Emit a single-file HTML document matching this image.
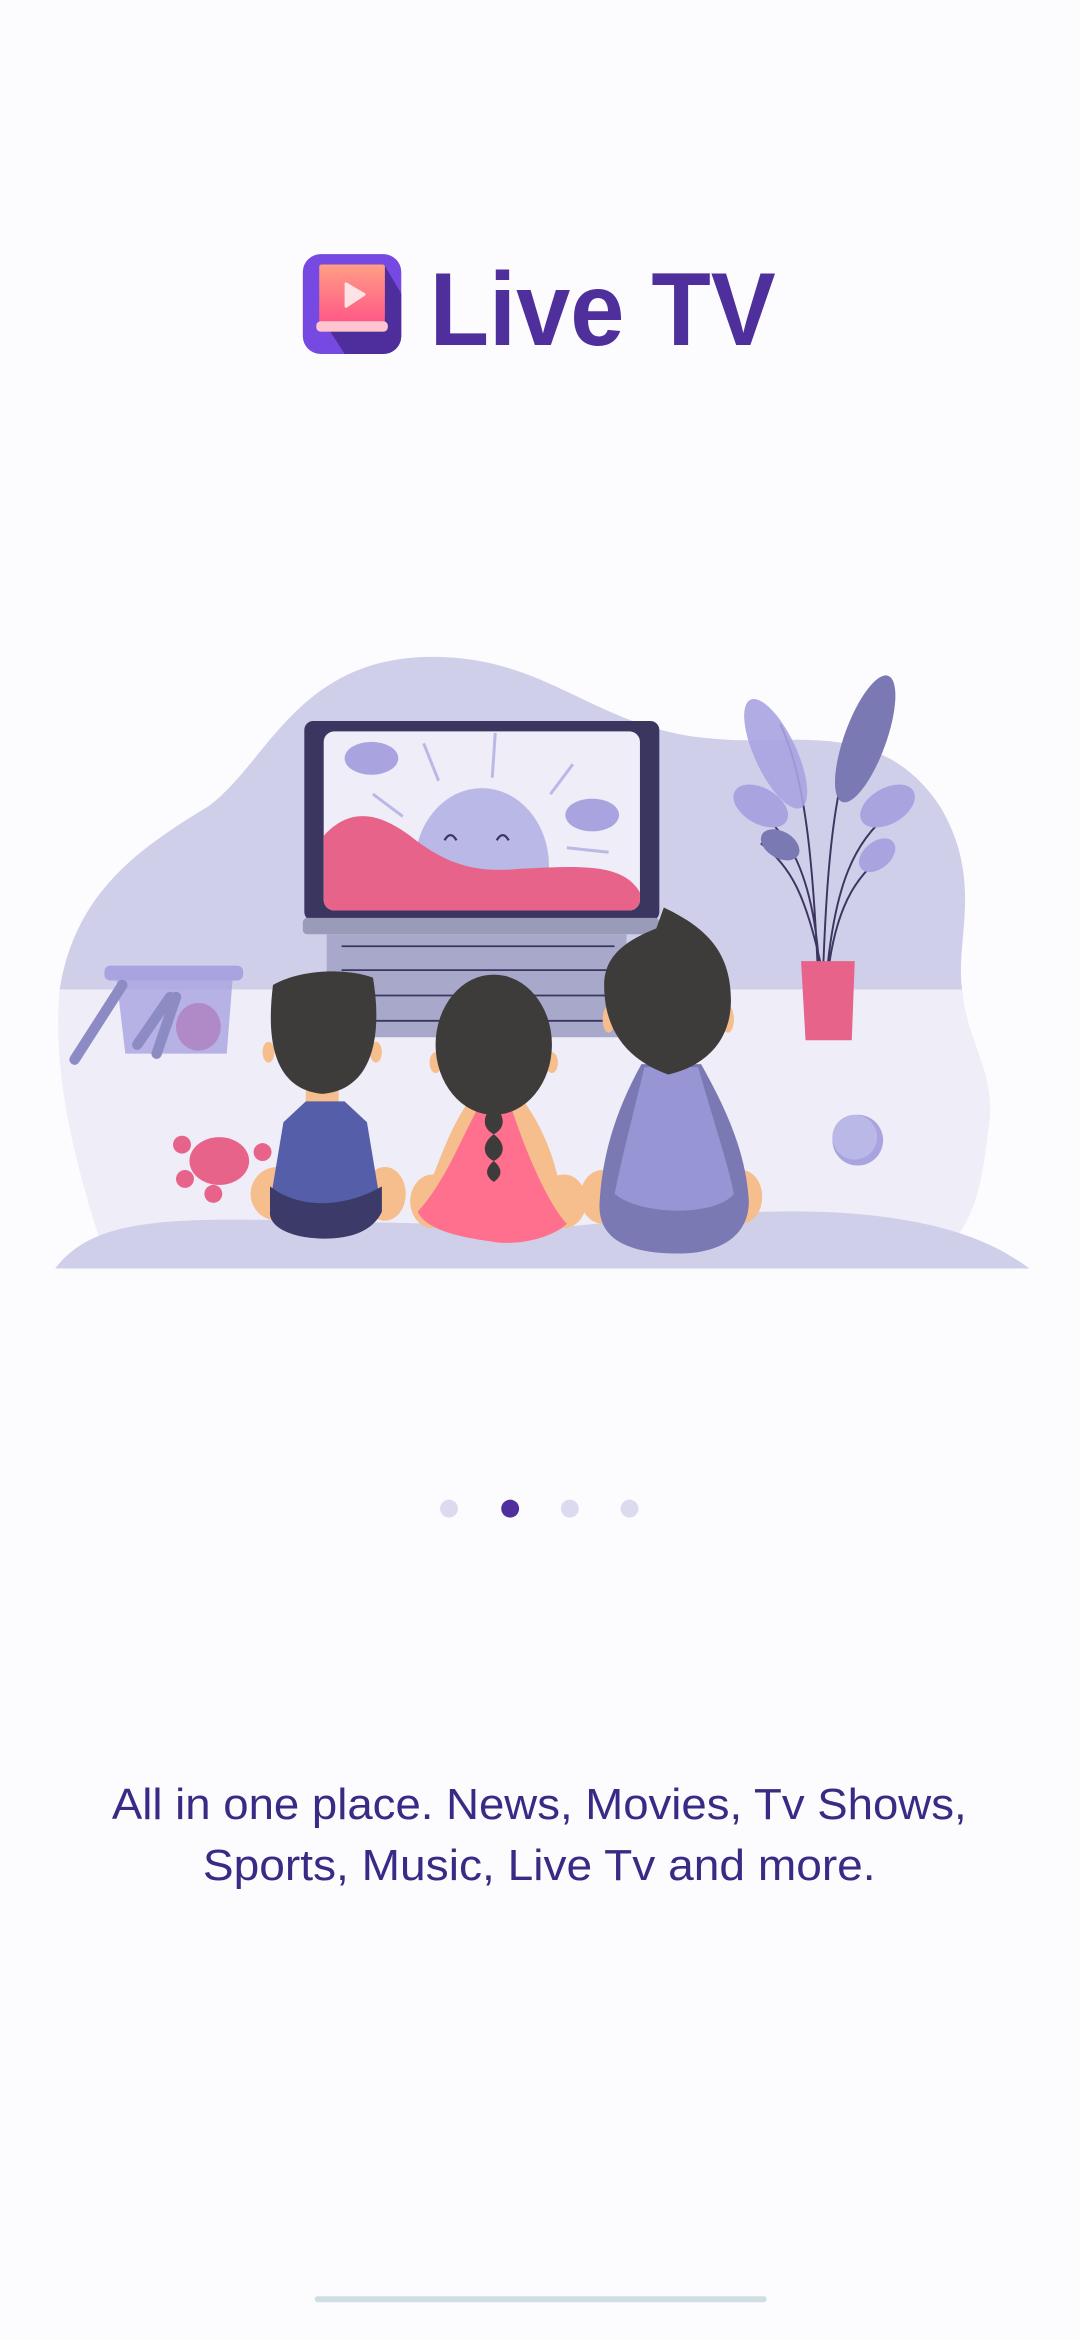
<!DOCTYPE html>
<html><head><meta charset="utf-8"><style>
html,body{margin:0;padding:0;background:#fcfbfe;}
svg{display:block}
</style></head><body>
<svg width="1080" height="2340" viewBox="0 0 724 1568" xmlns="http://www.w3.org/2000/svg">
<rect width="724" height="1568" fill="#fcfbfe"/>
<defs>
<linearGradient id="scr" x1="0" y1="0" x2="0" y2="1"><stop offset="0" stop-color="#ff9e86"/><stop offset="1" stop-color="#ff4d86"/></linearGradient>
<clipPath id="ic"><rect x="203" y="170" width="66" height="67" rx="12"/></clipPath>
</defs>
<rect x="203" y="170" width="66" height="67" rx="12" fill="#7649e3"/>
<g clip-path="url(#ic)"><polygon points="258,178 280,215 280,240 233,240 215,212 258,212" fill="#4e2e9b"/></g>
<rect x="214" y="177" width="44" height="45" rx="1.5" fill="url(#scr)"/>
<path d="M232,190 L244,197 L232,205 Z" fill="#fde3e6" stroke="#fde3e6" stroke-width="2" stroke-linejoin="round"/>
<rect x="212" y="215" width="48" height="7" rx="3" fill="#fcc5cf"/>
<text x="288" y="231" textLength="232" lengthAdjust="spacingAndGlyphs" font-family="Liberation Sans, sans-serif" font-weight="bold" font-size="70" fill="#4f2f9b">Live TV</text>

<path d="M40,663 C50,600 90,570 140,540 C180,510 200,440 290,440 C370,440 400,490 480,495 C530,500 590,480 630,540 C660,590 640,630 645,663 Z" fill="#d0cfea"/>
<path d="M40,663 L645,663 C648,700 670,720 662,760 C658,800 650,825 630,840 L70,840 C50,780 35,720 40,663 Z" fill="#efedf7"/>
<path d="M37,850 C60,820 100,815 200,818 L380,822 C450,815 520,808 580,814 C640,820 670,835 690,850 Z" fill="#d0cfea"/>

<rect x="204" y="483" width="238" height="134" rx="6" fill="#3a3660"/>
<rect x="217" y="490" width="212" height="120" rx="7" fill="#efedf7"/>
<clipPath id="sc"><rect x="217" y="490" width="212" height="120" rx="7"/></clipPath>
<g clip-path="url(#sc)">
<ellipse cx="323" cy="580" rx="45" ry="52" fill="#bab8e6"/>
<path d="M217,560 C235,540 255,545 275,560 C300,580 320,585 350,582 C390,580 420,578 430,600 L430,612 L217,612 Z" fill="#e8638a"/>
<path d="M298,563 q4,-7 8,0 M333,563 q4,-7 8,0" stroke="#3a3660" stroke-width="1.5" fill="none"/>
<path d="M284,498 l10,25 M332,491 l-2,30 M384,512 l-15,20 M250,532 l20,15 M380,568 l28,3" stroke="#bab8e6" stroke-width="2" fill="none"/>
<ellipse cx="249" cy="508" rx="18" ry="11" fill="#a9a3e0"/>
<ellipse cx="397" cy="546" rx="18" ry="11" fill="#a9a3e0"/>
</g>
<rect x="203" y="615" width="239" height="11" rx="3" fill="#9a9bb8"/>
<rect x="219" y="626" width="201" height="69" fill="#a7a8ca"/>
<path d="M229,634 h183 M229,650 h183 M229,667 h183 M229,684 h183" stroke="#3a3660" stroke-width="1.2"/>

<g fill="none" stroke="#3a3660" stroke-width="1.3">
<path d="M548,645 C545,580 540,520 523,485 M552,645 C555,570 560,510 584,465 M549,645 C545,590 530,555 502,540 M555,645 C560,600 570,560 604,540 M550,645 C540,600 530,580 510,565 M556,645 C562,605 575,585 596,570"/>
</g>
<ellipse cx="520" cy="505" rx="14" ry="40" transform="rotate(-25 520 505)" fill="#a9a3e0" opacity="0.9"/>
<ellipse cx="580" cy="495" rx="14" ry="45" transform="rotate(20 580 495)" fill="#7b79b3"/>
<ellipse cx="510" cy="540" rx="20" ry="12" transform="rotate(30 510 540)" fill="#a9a3e0"/>
<ellipse cx="595" cy="540" rx="20" ry="12" transform="rotate(-30 595 540)" fill="#a9a3e0"/>
<ellipse cx="523" cy="566" rx="14" ry="9" transform="rotate(30 523 566)" fill="#7b79b3"/>
<ellipse cx="588" cy="573" rx="14" ry="9" transform="rotate(-40 588 573)" fill="#a9a3e0"/>
<polygon points="537,644 573,644 571,697 540,697" fill="#e8638a"/>

<rect x="70" y="647" width="93" height="10" rx="4" fill="#a9a3e0"/>
<polygon points="78,655 156,655 152,706 84,706" fill="#a9a3e0" opacity="0.8"/>
<ellipse cx="133" cy="688" rx="15" ry="16" fill="#b08ac6"/>
<path d="M50,710 L82,660 M105,706 L118,668 M92,700 L114,668" stroke="#8d8bc3" stroke-width="7" stroke-linecap="round"/>

<ellipse cx="147" cy="778" rx="20" ry="16" fill="#e8638a"/>
<circle cx="122" cy="767" r="6" fill="#e8638a"/><circle cx="176" cy="772" r="6" fill="#e8638a"/>
<circle cx="124" cy="790" r="6" fill="#e8638a"/><circle cx="143" cy="800" r="6" fill="#e8638a"/>
<circle cx="575" cy="764" r="17" fill="#a9a3e0"/><circle cx="573" cy="762" r="15" fill="#bab8e6"/>

<ellipse cx="186" cy="800" rx="18" ry="18" fill="#f5be8c"/><ellipse cx="258" cy="800" rx="14" ry="18" fill="#f5be8c"/>
<rect x="205" y="720" width="22" height="20" fill="#f5be8c"/>
<path d="M205,738 L231,738 L246,752 L254,800 C250,820 235,828 218,828 C195,828 180,820 182,800 L190,752 Z" fill="#555ea8"/>
<path d="M181,795 C200,810 230,810 256,795 L256,812 C250,825 235,830 218,830 C195,830 180,822 181,812 Z" fill="#3b3a69"/>
<ellipse cx="180" cy="705" rx="4" ry="7" fill="#f5be8c"/><ellipse cx="252" cy="705" rx="4" ry="7" fill="#f5be8c"/>
<path d="M183,660 C200,650 230,648 250,655 C256,690 252,730 216,733 C185,730 178,700 183,660 Z" fill="#3d3c3b"/>

<ellipse cx="290" cy="805" rx="15" ry="18" fill="#f5be8c"/><ellipse cx="378" cy="805" rx="15" ry="18" fill="#f5be8c"/>
<path d="M320,730 L345,730 C370,760 375,790 380,820 C370,830 345,835 330,832 C300,828 285,822 280,812 C295,780 300,755 320,730 Z" fill="#f5be8c"/>
<path d="M322,740 L342,740 C355,780 370,810 380,820 C370,830 345,835 330,832 C300,828 285,822 280,812 C300,790 310,760 322,740 Z" fill="#ff6f8e"/>
<ellipse cx="292" cy="712" rx="4" ry="7" fill="#f5be8c"/><ellipse cx="370" cy="712" rx="4" ry="7" fill="#f5be8c"/>
<ellipse cx="331" cy="700" rx="39" ry="47" fill="#3d3c3b"/>
<path d="M331,740 c-8,8 -8,16 0,20 c-8,6 -8,14 0,18 c-6,5 -6,10 0,14 c6,-4 6,-9 0,-14 c8,-4 8,-12 0,-18 c8,-4 8,-12 0,-20 Z" fill="#3d3c3b"/>

<ellipse cx="404" cy="802" rx="15" ry="18" fill="#f5be8c"/><ellipse cx="497" cy="802" rx="14" ry="18" fill="#f5be8c"/>
<path d="M430,713 L470,713 C485,740 500,770 502,805 C502,830 480,840 455,840 C420,840 400,830 402,805 C404,770 415,740 430,713 Z" fill="#7b79b3"/>
<path d="M432,715 L468,715 C478,750 488,780 492,800 C480,815 430,815 412,800 C418,770 425,745 432,715 Z" fill="#9795d3"/>
<ellipse cx="408" cy="683" rx="4" ry="9" fill="#f5be8c"/><ellipse cx="488" cy="683" rx="4" ry="9" fill="#f5be8c"/>
<path d="M445,608 C470,620 490,635 490,670 C490,700 470,715 448,720 C420,710 405,690 405,660 C405,640 420,630 440,622 Z" fill="#3d3c3b"/>

<circle cx="301" cy="1011" r="6" fill="#dcdaee"/>
<circle cx="342" cy="1011" r="6" fill="#4f2f9b"/>
<circle cx="382" cy="1011" r="6" fill="#dcdaee"/>
<circle cx="422" cy="1011" r="6" fill="#dcdaee"/>

<text x="75" y="1219" textLength="573" lengthAdjust="spacingAndGlyphs" font-family="Liberation Sans, sans-serif" font-size="29" fill="#3a2a86">All in one place. News, Movies, Tv Shows,</text>
<text x="136" y="1260" textLength="451" lengthAdjust="spacingAndGlyphs" font-family="Liberation Sans, sans-serif" font-size="29" fill="#3a2a86">Sports, Music, Live Tv and more.</text>

<rect x="211" y="1539" width="303" height="4" rx="2" fill="#cfdde5"/>
</svg>
</body></html>
